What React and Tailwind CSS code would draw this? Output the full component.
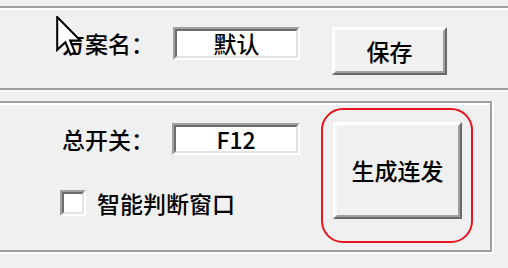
import React from "react";

const Sunken = ({ className = "", children }) => (
  <div className={`border-2 border-t-[#a0a0a0] border-l-[#a0a0a0] border-b-white border-r-white ${className}`}>
    <div className="w-full h-full border-2 border-t-[#6d6d6d] border-l-[#6d6d6d] border-b-[#e3e3e3] border-r-[#e3e3e3] bg-white flex items-center justify-center">
      {children}
    </div>
  </div>
);

const Button = ({ className = "", children }) => (
  <div className={`border-2 border-t-white border-l-white border-b-[#696969] border-r-[#696969] ${className}`}>
    <div className="w-full h-full border-2 border-t-[#f7f7f7] border-l-[#f7f7f7] border-b-[#a0a0a0] border-r-[#a0a0a0] bg-[#f0f0f0] flex items-center justify-center text-[23px]">
      {children}
    </div>
  </div>
);

// etched group frame, left edge sits off-screen
const Group = ({ className = "", children }) => (
  <div className={`border-r-2 border-b-2 border-white ${className}`}>
    <div className="h-full border-2 border-[#a0a0a0]">
      <div className="h-full border-t-2 border-l-2 border-white">{children}</div>
    </div>
  </div>
);

export default function App() {
  return (
    <div className="relative w-[508px] h-[268px] overflow-hidden bg-[#f0f0f0] text-black font-['Noto_Sans_CJK_SC','Noto_Sans',sans-serif] font-medium leading-none flex flex-col">
      {/* top group */}
      <Group className="mt-[6px] ml-[-10px] w-[530px] h-[86px] shrink-0">
        <div className="flex items-start pt-[17px] pl-[68px]">
          <div className="w-[111px] h-[33px] flex items-center text-[23px]">方案名：</div>
          <Sunken className="w-[127px] h-[33px]">
            <span className="text-[23px]">默认</span>
          </Sunken>
          <Button className="ml-[32px] w-[115px] h-[48px]">保存</Button>
        </div>
      </Group>

      {/* bottom group */}
      <Group className="mt-[9px] ml-[-10px] w-[504px] h-[153px] shrink-0">
        <div className="flex items-start pl-[68px]">
          <div className="w-[238px] pt-[18px] flex flex-col">
            <div className="flex items-center">
              <div className="w-[110px] text-[23px]">总开关：</div>
              <Sunken className="w-[128px] h-[32px]">
                <span className="text-[23px]">F12</span>
              </Sunken>
            </div>
            <div className="flex items-center mt-[35px] ml-[-2px]">
              <Sunken className="w-[26px] h-[26px]" />
              <span className="ml-[11px] text-[23px]">智能判断窗口</span>
            </div>
          </div>
          <div className="ml-[21px] mt-[3px] border-2 border-[#e8141e] rounded-[22px] pt-[12px] pl-[10px] pr-[9px] pb-[22px]">
            <Button className="w-[129px] h-[97px]">生成连发</Button>
          </div>
        </div>
      </Group>

      {/* mouse pointer */}
      <svg className="absolute left-[56px] top-[16px]" width="26" height="40" viewBox="0 0 12.5 19.5">
        <path
          d="M0.5 0.5 L0.5 16.5 L4.5 12.8 L7 18.8 L9.2 17.8 L6.8 12 L11.8 12 Z"
          fill="white"
          stroke="black"
          strokeWidth="1"
          strokeLinejoin="miter"
        />
      </svg>
    </div>
  );
}
